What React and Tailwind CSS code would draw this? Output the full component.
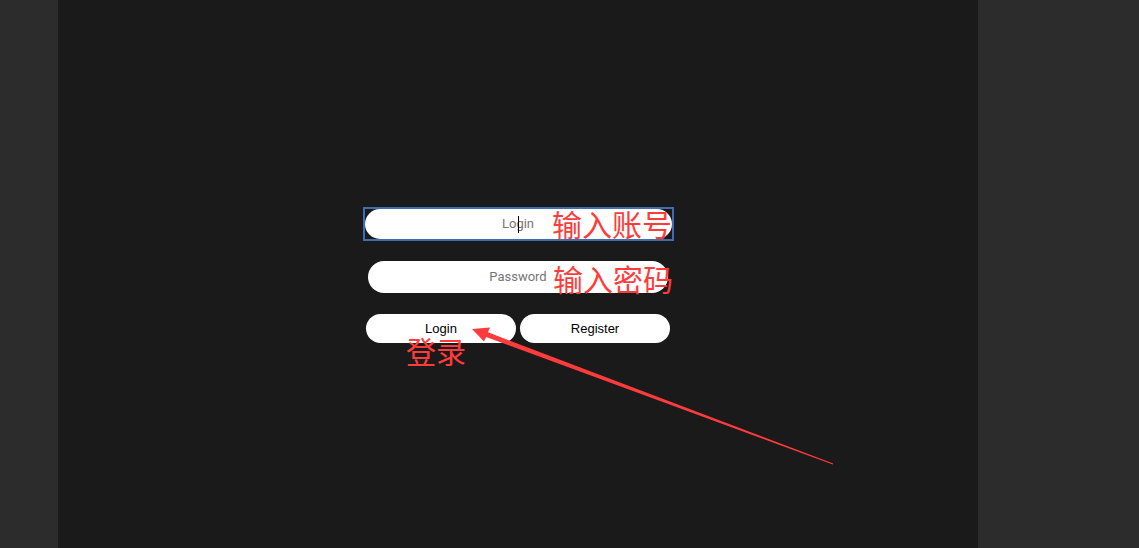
import React from "react";

const redText = "text-[#ff3b3b] text-[30px] leading-none whitespace-nowrap";

const Arrow = () => {
  return (
    <svg
      className="absolute left-0 top-0 pointer-events-none"
      width="1139"
      height="548"
      viewBox="0 0 1139 548"
    >
      <polygon
        fill="#ff3b3b"
        points="472,329 490,327.5 488,332.3 833.2,463.6 832.8,464.6 486.1,336.9 484,341.5"
      />
    </svg>
  );
};

const App = () => {
  return (
    <div
      className="relative w-full h-[548px] flex bg-[#2c2c2c] overflow-hidden"
      style={{ fontFamily: "Roboto, 'Liberation Sans', sans-serif" }}
    >
      <div className="w-[58px] shrink-0" />

      <div className="w-[920px] shrink-0 bg-[#1a1a1a] flex items-center justify-center">
        <form
          onSubmit={(e) => e.preventDefault()}
          className="flex flex-col items-center mt-[2px]"
        >
          <div className="border-2 border-[#3e6db4] w-[311px] h-[34px]">
            <div className="relative h-[30px] w-full bg-white rounded-full flex items-center justify-center">
              <span className="text-[13px] text-[#757575]">Login</span>
              <span className="absolute left-[153px] top-[7px] w-px h-[17px] bg-black" />
            </div>
          </div>

          <div className="mt-[20px] h-[32px] w-[300px] bg-white rounded-full flex items-center justify-center">
            <span className="text-[13px] text-[#757575]">Password</span>
          </div>

          <div className="mt-[21px] flex gap-[4px]">
            <button
              type="submit"
              className="w-[150px] h-[29px] bg-white rounded-full text-[13px] text-black"
              style={{ fontFamily: "'Liberation Sans', Arial, sans-serif" }}
            >
              Login
            </button>
            <button
              type="button"
              className="w-[150px] h-[29px] bg-white rounded-full text-[13px] text-black"
              style={{ fontFamily: "'Liberation Sans', Arial, sans-serif" }}
            >
              Register
            </button>
          </div>
        </form>
      </div>

      <div className="flex-1" />

      {/* annotations drawn on top of the screenshot */}
      <div
        className="absolute inset-0 pointer-events-none"
        style={{ fontFamily: "'Noto Sans CJK SC', sans-serif" }}
      >
        <span className={`absolute left-[552px] top-[208px] ${redText}`}>输入账号</span>
        <span className={`absolute left-[553px] top-[263px] ${redText}`}>输入密码</span>
        <span className={`absolute left-[406px] top-[335px] ${redText}`}>登录</span>
        <Arrow />
      </div>
    </div>
  );
};

export default App;
